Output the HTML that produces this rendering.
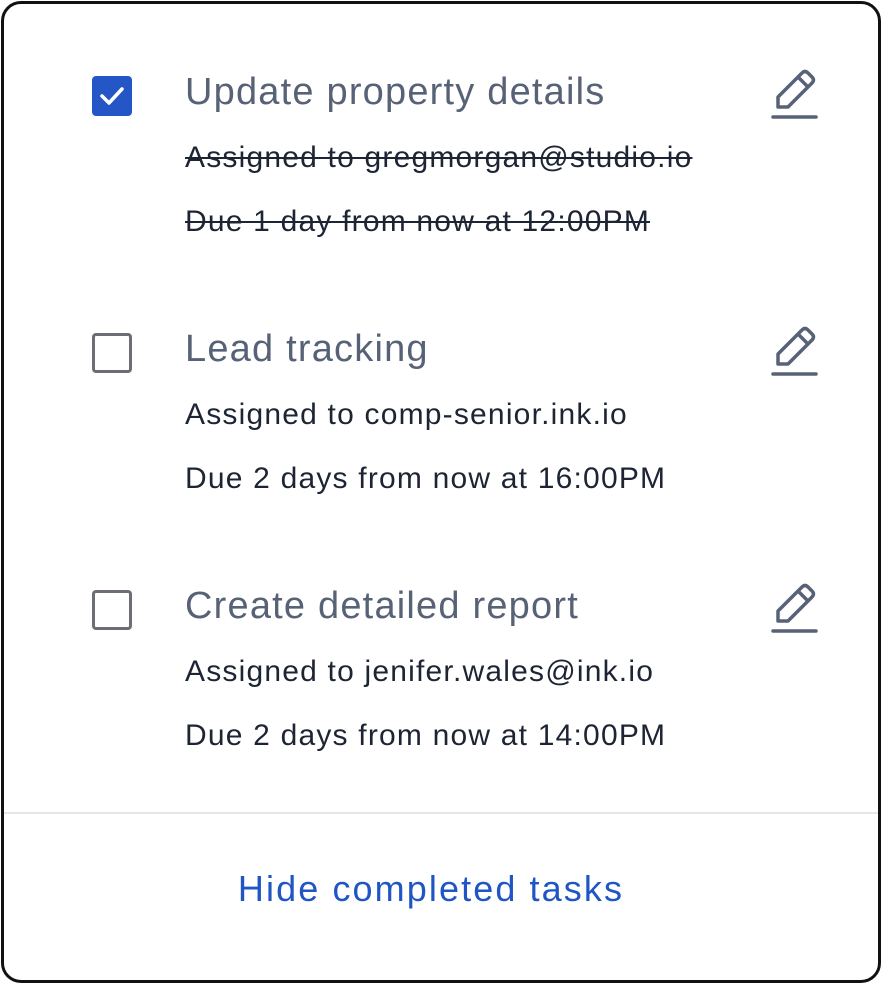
<!DOCTYPE html>
<html><head><style>
html,body{margin:0;padding:0;background:#fff;}
.card{position:absolute;left:1px;top:1px;width:874px;height:976px;border:3px solid #111;border-radius:20px;background:#fff;font-family:"Liberation Sans",sans-serif;overflow:hidden;}
.task{position:absolute;left:-1px;width:100%;}
.cb{position:absolute;left:89px;width:34px;height:34px;border:3px solid #6b6e74;border-radius:4px;}
.cb.on{background:#2457c5;border-color:#2457c5;}
.title{position:absolute;left:182px;font-size:38px;color:#586277;white-space:nowrap;letter-spacing:1.2px;}
.sub{position:absolute;left:182px;font-size:30px;color:#1d2433;white-space:nowrap;letter-spacing:1.2px;}
.strike{text-decoration:line-through;text-decoration-thickness:2px;}
.pen{position:absolute;left:767px;}
.div{position:absolute;left:0;top:808px;width:100%;height:2px;background:#e6e6e8;}
.link{position:absolute;left:-10px;width:100%;top:864px;text-align:center;font-size:36px;color:#1f56c4;letter-spacing:2.1px;}
</style></head><body>
<div class="card">
<div class="task" style="top:-1px">
 <div class="cb on" style="top:73px"><svg width="34" height="34" viewBox="0 0 34 34"><path d="M7 17 L14 24 L27 10" stroke="#fff" stroke-width="3.5" fill="none" stroke-linecap="round" stroke-linejoin="round"/></svg></div>
 <div class="title" style="top:68px">Update property details</div>
 <div class="sub strike" style="top:138px">Assigned to gregmorgan@studio.io</div>
 <div class="sub strike" style="top:202px">Due 1 day from now at 12:00PM</div>
 <svg class="pen" style="top:66px" width="50" height="52" viewBox="0 0 50 52"><path d="M8 38 L8 28 L32 4 Q35 1 38 4 L42 8 Q45 11 42 14 L18 38 Z M28 8 L38 18" stroke="#586277" stroke-width="3.5" fill="none" stroke-linejoin="round"/><line x1="3" y1="48" x2="46" y2="48" stroke="#586277" stroke-width="3.5" stroke-linecap="round"/></svg>
</div>
<div class="task" style="top:256px">
 <div class="cb" style="top:73px"></div>
 <div class="title" style="top:68px">Lead tracking</div>
 <div class="sub" style="top:138px">Assigned to comp-senior.ink.io</div>
 <div class="sub" style="top:202px">Due 2 days from now at 16:00PM</div>
 <svg class="pen" style="top:66px" width="50" height="52" viewBox="0 0 50 52"><path d="M8 38 L8 28 L32 4 Q35 1 38 4 L42 8 Q45 11 42 14 L18 38 Z M28 8 L38 18" stroke="#586277" stroke-width="3.5" fill="none" stroke-linejoin="round"/><line x1="3" y1="48" x2="46" y2="48" stroke="#586277" stroke-width="3.5" stroke-linecap="round"/></svg>
</div>
<div class="task" style="top:513px">
 <div class="cb" style="top:73px"></div>
 <div class="title" style="top:68px">Create detailed report</div>
 <div class="sub" style="top:138px">Assigned to jenifer.wales@ink.io</div>
 <div class="sub" style="top:202px">Due 2 days from now at 14:00PM</div>
 <svg class="pen" style="top:66px" width="50" height="52" viewBox="0 0 50 52"><path d="M8 38 L8 28 L32 4 Q35 1 38 4 L42 8 Q45 11 42 14 L18 38 Z M28 8 L38 18" stroke="#586277" stroke-width="3.5" fill="none" stroke-linejoin="round"/><line x1="3" y1="48" x2="46" y2="48" stroke="#586277" stroke-width="3.5" stroke-linecap="round"/></svg>
</div>
<div class="div"></div>
<div class="link">Hide completed tasks</div>
</div>
</body></html>
